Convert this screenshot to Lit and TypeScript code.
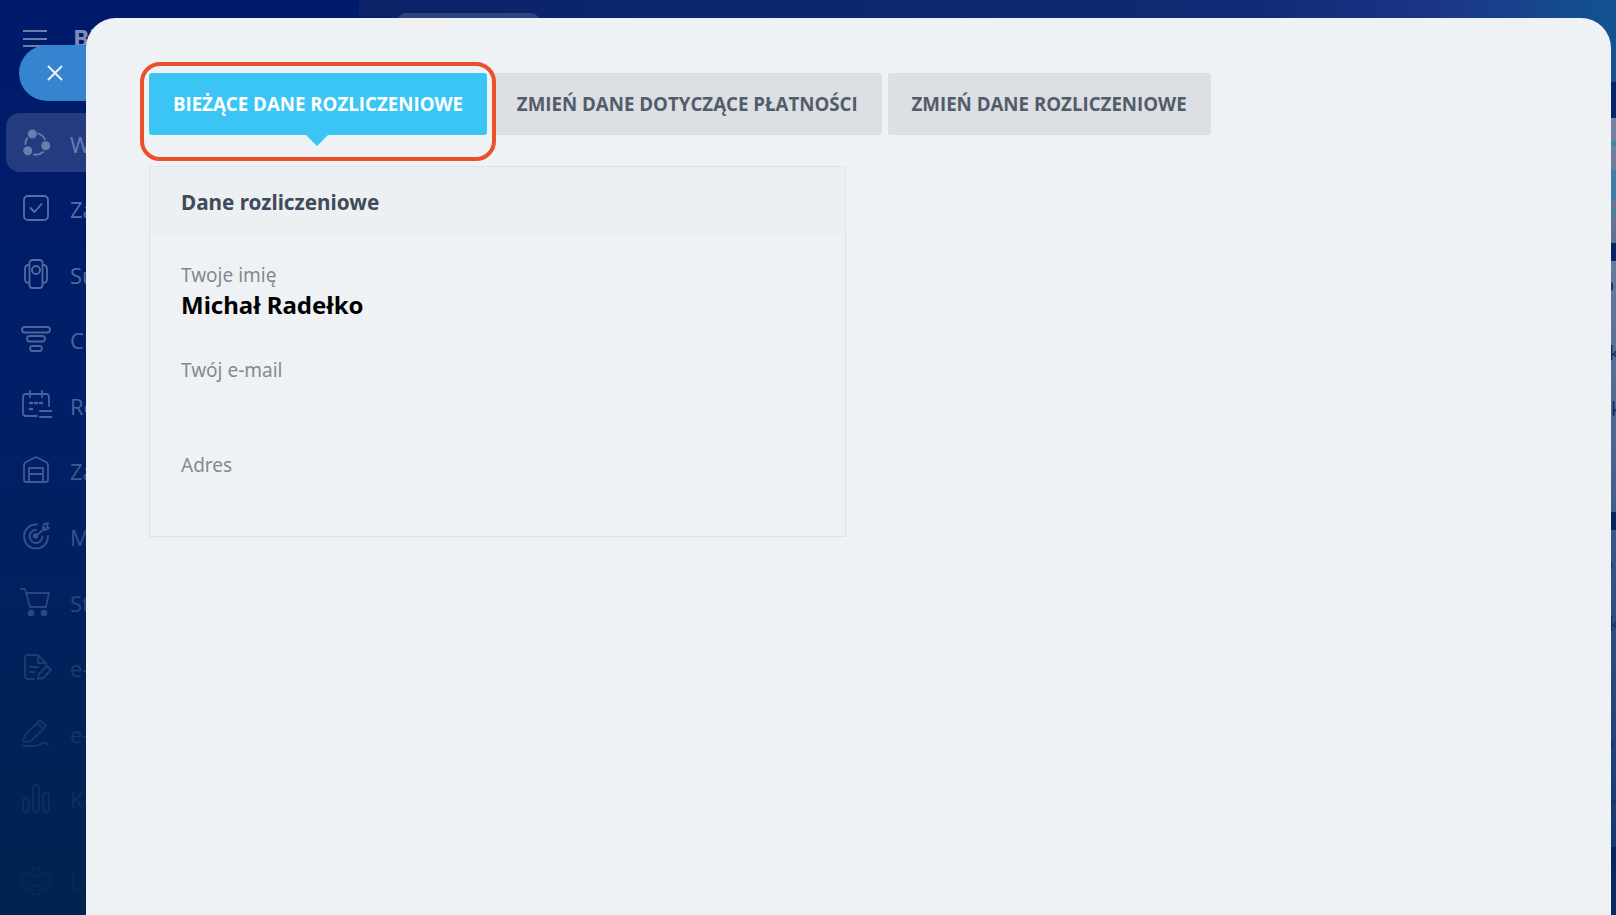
import { LitElement, html, css, svg } from "lit";
import { customElement } from "lit/decorators.js";

const icons = [
  svg`<circle cx="12.3" cy="7" r="3.6" fill="currentColor"/><circle cx="25.7" cy="18.7" r="3.6" fill="currentColor"/><circle cx="7.7" cy="23.7" r="3.6" fill="currentColor"/><path d="M18 6.5a11 11 0 0 1 7 6M23 25a11 11 0 0 1-9 2.6M5.4 17a11 11 0 0 1 1.6-6"/>`,
  svg`<rect x="4" y="4" width="24" height="24" rx="4"/><path d="M10.500 16l4 4 7-8"/>`,
  svg`<rect x="9.500" y="2" width="13" height="28" rx="3"/><circle cx="16" cy="12" r="4"/><path d="M9 7C6 7 5 9 5 11v10c0 2 1 4 4 4M23 7c3 0 4 2 4 4v10c0 2-1 4-4 4"/>`,
  svg`<rect x="2" y="4" width="28" height="5.500" rx="2.700"/><rect x="7" y="13" width="18" height="5.500" rx="2.700"/><rect x="10" y="23" width="12" height="5" rx="2.500"/>`,
  svg`<path d="M17 27H6a3 3 0 0 1-3-3V8a3 3 0 0 1 3-3h20a3 3 0 0 1 3 3v9M10 2v6M22 2v6M20 22h12M20 28h12"/><path d="M10 14h2M15 14h2M20 14h2M10 20h2" stroke-width="2.600"/>`,
  svg`<path d="M4 26V11q0-2 2-3l10-5 10 5q2 1 2 3v15q0 2-2 2H6q-2 0-2-2zM9 28V14h14v14M9 20h14"/>`,
  svg`<path d="M17 4.500A12 12 0 1 0 28 16"/><path d="M16 10a6.500 6.500 0 1 0 6.500 6.500"/><circle cx="15.500" cy="16" r="1.800" fill="currentColor"/><path d="M16 16l9-8M23 8l1-4 4-1-1 4 2 1-4 2z"/>`,
  svg`<path d="M1 3h4l5 18h16l3-14H7"/><circle cx="11" cy="27" r="2.400" fill="currentColor"/><circle cx="24" cy="27" r="2.400" fill="currentColor"/>`,
  svg`<path d="M14 28H8a3 3 0 0 1-3-3V7a3 3 0 0 1 3-3h10l8 8v2M18 4v8h8M10 16h8M10 21h5"/><path d="M18 28l1-5 8-8 4 4-8 8z"/>`,
  svg`<path d="M3 25l2-7L20 3l6 6-15 15zM17 6l6 6M3 29h12c3 0 6-3 9-3s4 1 4 2"/>`,
  svg`<rect x="3" y="16" width="6" height="14" rx="3"/><rect x="13" y="3" width="6" height="27" rx="3"/><rect x="23" y="11" width="6" height="19" rx="3"/>`,
  svg`<circle cx="16" cy="16" r="5"/><path d="M13 3h6l1 4 4 2 4-1 3 5-3 3 3 3-3 5-4-1-4 2-1 4h-6l-1-4-4-2-4 1-3-5 3-3-3-3 3-5 4 1 4-2z"/>`,
];

const nav = [
  ["Współpraca", 0.5], ["Zadania", 0.5], ["Sukces", 0.48], ["CRM", 0.44], ["Rezerwacje", 0.42],
  ["Zakupy", 0.36], ["Marketing", 0.32], ["Strona", 0.24], ["e-Commerce", 0.17], ["e-Podpis", 0.12],
  ["Kontakty", 0.08], ["Ustawienia", 0.035],
] as const;

const frag2: [string, number][] = [["o", -9], ["k", -2], ["k", 0]];
const frag3: [string, number][] = [["p", -10], ["k", -2], ["s", -8], ["o", -9], ["n", -2]];

@customElement("app-root")
export class AppRoot extends LitElement {
  static styles = css`
    :host { display: block; width: 1616px; height: 915px; position: relative; overflow: hidden;
      font-family: "Open Sans", "Noto Sans", sans-serif; background: #02205f; }
    .bg { display: flex; height: 100%; }
    aside { width: 359px; flex: none; box-sizing: border-box;
      background: linear-gradient(180deg, #001a6b 0%, #011f68 45%, #01234f 100%); }
    .brand { height: 82px; box-sizing: border-box; margin: 0 6px 31px 19px; border-bottom: 1px solid rgba(255,255,255,.1);
      display: flex; align-items: flex-start; gap: 26px; padding: 30px 0 0 4px; color: #7d8db5; }
    .burger { width: 24px; height: 17px; flex: none; display: flex; flex-direction: column; justify-content: space-between; }
    .burger i { display: block; height: 2px; background: #6c7da6; }
    .logo { font: 700 24px/16px "Open Sans", sans-serif; }
    nav { display: flex; flex-direction: column; gap: 6.6px; padding: 0 6px; }
    .item { height: 59px; display: flex; align-items: center; gap: 18px; padding-left: 14px; border-radius: 14px;
      color: rgb(175, 190, 222); font-size: 22px; white-space: nowrap; box-sizing: border-box; }
    .item span { position: relative; top: 1px; }
    .item.active { background: rgba(255,255,255,.14); }
    .item.last { margin-top: 17px; }
    .item svg { width: 32px; height: 32px; flex: none; fill: none; stroke: currentColor; stroke-width: 1.8; stroke-linecap: round; stroke-linejoin: round; }
    main { flex: 1; display: flex; flex-direction: column; min-width: 0; overflow: hidden; }
    .top { height: 82px; flex: none; box-sizing: border-box; padding: 13px 0 0 37px;
      background: linear-gradient(90deg, #0b2268 0%, #0f2a74 70%, #1b3486 85%, #135392 100%); }
    .chip { width: 145px; height: 40px; border-radius: 11px; background: rgba(255,255,255,.15); }
    .stack { display: flex; flex-direction: column; gap: 18px; padding: 36px 0 0 1100px; box-sizing: border-box;
      background: linear-gradient(180deg, #04246c, #03265c); flex: 1; }
    .card { padding-left: 152px; box-sizing: border-box; flex: none; color: #0c2a62; font-size: 20px; white-space: nowrap; overflow: hidden; }
    .c1 { height: 125px; background: linear-gradient(180deg, #7684a3, #5d6f95); }
    .c1 svg { display: block; width: 20px; height: 125px; }
    .c2 { height: 251px; background: linear-gradient(180deg, #687a9d, #3e5e8e); padding-top: 10px; display: flex; flex-direction: column; gap: 28px; }
    .c2 .line:nth-child(2) { margin-top: 12px; }
    .c3 { height: 317px; background: linear-gradient(180deg, #38578a, #133a70); padding-top: 20px; display: flex; flex-direction: column; gap: 32px; color: #16335f; }
    .c4 { height: 60px; background: #062a60; }
    .line { line-height: 28px; }

    .close { position: absolute; left: 19px; top: 45px; width: 100px; height: 56px; border-radius: 28px 0 0 28px;
      background: #3684cf; display: flex; align-items: center; padding-left: 26px; box-sizing: border-box; }
    .close svg { width: 20px; height: 20px; stroke: #fff; stroke-width: 2; fill: none; opacity: .9; }

    .panel { position: absolute; left: 86px; top: 18px; width: 1525px; height: 930px; box-sizing: border-box;
      border-radius: 30px 30px 0 0; background: #eef2f5; padding: 55px 0 0 63px; }
    .tabs { display: flex; gap: 6px; position: relative; margin-bottom: 31px; }
    .tab { height: 62px; box-sizing: border-box; padding: 0 23.900px; border-radius: 3px; background: #dcdfe3; color: #535c69;
      font: 700 18.700px/62px "Open Sans", sans-serif; white-space: nowrap; position: relative; }
    .tab.on { background: #3bc5f5; color: #fff; }
    .tab.on::after { content: ""; position: absolute; left: 50%; top: 100%; margin-left: -11.500px;
      border: 11.500px solid transparent; border-top-color: #3bc5f5; border-bottom: 0; }
    .mark { position: absolute; left: -9px; top: -11px; width: 356px; height: 99px; box-sizing: border-box;
      border: 4px solid #e8512b; border-radius: 20px; pointer-events: none; }

    .box { width: 697px; height: 371px; box-sizing: border-box; border: 1px solid #dfe3e7; }
    .box header { height: 69px; background: #ecf0f3; padding-left: 31px; box-sizing: border-box;
      font: 700 20.700px/70px "Noto Sans", sans-serif; color: #404a5a; }
    .rows { padding: 9px 32px 0 31px; }
    .row { border-bottom: 1px solid #e9edf0; padding: 17px 0 16px; }
    .row + .row { padding-top: 18px; }
    .row:last-child { padding-bottom: 19px; }
    .label { font: 400 19px/26px "Noto Sans", sans-serif; color: #85898e; }
    .value { min-height: 34px; font: 700 24px/33px "Noto Sans", sans-serif; color: #000; }
  `;

  render() {
    return html`
      <div class="bg">
        <aside>
          <div class="brand"><div class="burger"><i></i><i></i><i></i></div><span class="logo">Bitrix24</span></div>
          <nav>
            ${nav.map(([label, o], i) => html`
              <div class="item ${i === 0 ? "active" : ""} ${i === nav.length - 1 ? "last" : ""}">
                <svg viewBox="0 0 32 32" style="opacity:${o}">${icons[i]}</svg>
                <span style="opacity:${o}">${label}</span>
              </div>`)}
          </nav>
        </aside>
        <main>
          <div class="top"><div class="chip"></div></div>
          <div class="stack">
            <div class="card c1">
              <svg viewBox="0 0 20 125"><path d="M0 24l20 9M0 95l20-9" stroke="#2f8f9f" stroke-width="4" fill="none"/><path d="M0 52h20v30H0z" fill="#3b7ea6"/></svg>
            </div>
            <div class="card c2">
              ${frag2.map(([c, x]) => html`<div class="line" style="margin-left:${x}px">${c}</div>`)}
            </div>
            <div class="card c3">
              ${frag3.map(([c, x]) => html`<div class="line" style="margin-left:${x}px">${c}</div>`)}
            </div>
            <div class="card c4"></div>
          </div>
        </main>
      </div>

      <div class="close">
        <svg viewBox="0 0 20 20"><path d="M3 3l14 14M17 3L3 17"/></svg>
      </div>

      <div class="panel">
        <div class="tabs">
          <div class="tab on">BIEŻĄCE DANE ROZLICZENIOWE</div>
          <div class="tab">ZMIEŃ DANE DOTYCZĄCE PŁATNOŚCI</div>
          <div class="tab">ZMIEŃ DANE ROZLICZENIOWE</div>
          <div class="mark"></div>
        </div>
        <section class="box">
          <header>Dane rozliczeniowe</header>
          <div class="rows">
            <div class="row"><div class="label">Twoje imię</div><div class="value">Michał Radełko</div></div>
            <div class="row"><div class="label">Twój e-mail</div><div class="value"></div></div>
            <div class="row"><div class="label">Adres</div></div>
          </div>
        </section>
      </div>
    `;
  }
}
